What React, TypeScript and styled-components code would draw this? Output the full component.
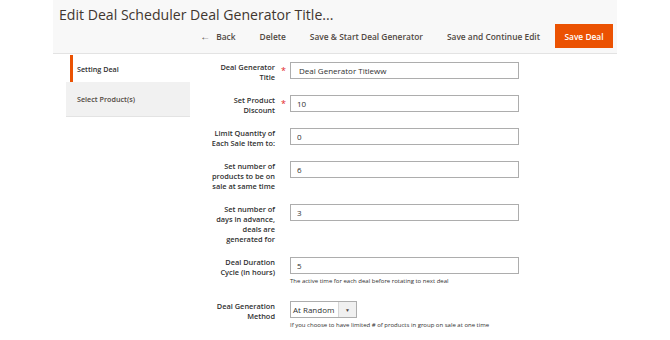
import React from 'react';
import styled, { createGlobalStyle } from 'styled-components';

const GlobalStyle = createGlobalStyle`
  html, body {
    margin: 0;
    padding: 0;
    background: #ffffff;
    font-family: "Open Sans", "Liberation Sans", sans-serif;
    color: #303030;
  }
`;

const Page = styled.div`
  width: 564px;
  margin: 0 auto;
`;

const Header = styled.header`
  background: #f8f8f8;
  border-bottom: 1px solid #e3e3e3;
  padding: 5px 4px 5px 6px;
`;

const Title = styled.h1`
  margin: 0;
  font-size: 14.1px;
  line-height: 19px;
  font-weight: 400;
  color: #41362f;
`;

const Actions = styled.div`
  display: flex;
  justify-content: flex-end;
  align-items: center;
`;

const TextButton = styled.button`
  background: none;
  border: none;
  padding: 0 12px;
  height: 24px;
  font-family: inherit;
  font-size: 8.4px;
  font-weight: 600;
  color: #514943;
  display: flex;
  align-items: center;
  gap: 6px;
  cursor: pointer;
`;

const Arrow = styled.span`
  font-size: 10px;
  line-height: 1;
`;

const PrimaryButton = styled.button`
  background: #eb5202;
  border: 1px solid #eb5202;
  color: #ffffff;
  height: 24px;
  width: 58px;
  margin-left: 3px;
  padding: 0;
  font-family: inherit;
  font-size: 8.4px;
  font-weight: 600;
  cursor: pointer;
`;

const Body = styled.div`
  display: flex;
  align-items: flex-start;
  padding-top: 1px;
`;

const Sidebar = styled.nav`
  width: 124px;
  margin-left: 13px;
  flex-shrink: 0;
`;

const Tab = styled.div<{ $active?: boolean }>`
  height: ${p => (p.$active ? '27px' : '35px')};
  box-sizing: border-box;
  display: flex;
  align-items: center;
  font-size: 7.2px;
  font-weight: 600;
  color: ${p => (p.$active ? '#303030' : '#514943')};
  background: ${p => (p.$active ? '#ffffff' : '#f1f1f1')};
  margin-left: ${p => (p.$active ? '4px' : '0')};
  padding-left: ${p => (p.$active ? '4px' : '11px')};
  border-left: ${p => (p.$active ? '3px solid #eb5202' : 'none')};
  border-bottom: ${p => (p.$active ? 'none' : '1px solid #e3e3e3')};
`;

const Form = styled.form`
  margin-left: 10px;
  margin-top: 7px;
  width: 330px;
`;

const Row = styled.div`
  display: grid;
  grid-template-columns: 75px 15px 229px;
  align-items: start;
  margin-bottom: 13px;
`;

const Label = styled.label`
  justify-self: end;
  text-align: right;
  width: 66px;
  font-size: 7.4px;
  line-height: 10px;
  font-weight: 600;
  color: #303030;
`;

const Required = styled.span`
  color: #e22626;
  font-size: 9px;
  line-height: 17px;
  text-align: center;
  padding-left: 2px;
`;

const Control = styled.div`
  display: flex;
  flex-direction: column;
  align-items: flex-start;
`;

const Input = styled.input<{ $pad?: number }>`
  width: 229px;
  height: 17px;
  box-sizing: border-box;
  border: 1px solid #adadad;
  padding: 0 0 0 ${p => p.$pad ?? 6}px;
  font-family: inherit;
  font-size: 8px;
  color: #303030;
  background: #ffffff;
  outline: none;
`;

const SelectBox = styled.div`
  display: flex;
  width: 67px;
  height: 17px;
  box-sizing: border-box;
  border: 1px solid #adadad;
  background: #ffffff;
  font-size: 8px;
  color: #303030;
`;

const SelectValue = styled.span`
  flex: 1;
  display: flex;
  align-items: center;
  padding-left: 2px;
`;

const SelectArrow = styled.span`
  width: 17px;
  display: flex;
  align-items: center;
  justify-content: center;
  background: #f0f0f0;
  border-left: 1px solid #d6d6d6;
  font-size: 5px;
  color: #514943;
`;

const Note = styled.div`
  font-size: 6px;
  line-height: 10px;
  margin: 2px 0 2px;
  color: #303030;
`;

type Field = {
  label: string;
  value: string;
  required?: boolean;
  note?: string;
  pad?: number;
};

const fields: Field[] = [
  { label: 'Deal Generator Title', value: 'Deal Generator Titleww', required: true, pad: 8 },
  { label: 'Set Product Discount', value: '10', required: true },
  { label: 'Limit Quantity of Each Sale Item to:', value: '0' },
  { label: 'Set number of products to be on sale at same time', value: '6' },
  { label: 'Set number of days in advance, deals are generated for', value: '3' },
  {
    label: 'Deal Duration Cycle (in hours)',
    value: '5',
    note: 'The active time for each deal before rotating to next deal',
  },
];

export default function App() {
  return (
    <>
      <GlobalStyle />
      <Page>
        <Header>
          <Title>Edit Deal Scheduler Deal Generator Title...</Title>
          <Actions>
            <TextButton type="button">
              <Arrow>←</Arrow>
              <span>Back</span>
            </TextButton>
            <TextButton type="button">Delete</TextButton>
            <TextButton type="button">Save &amp; Start Deal Generator</TextButton>
            <TextButton type="button">Save and Continue Edit</TextButton>
            <PrimaryButton type="button">Save Deal</PrimaryButton>
          </Actions>
        </Header>

        <Body>
          <Sidebar>
            <Tab $active>Setting Deal</Tab>
            <Tab>Select Product(s)</Tab>
          </Sidebar>

          <Form onSubmit={e => e.preventDefault()}>
            {fields.map(f => (
              <Row key={f.label}>
                <Label>{f.label}</Label>
                <Required>{f.required ? '*' : ''}</Required>
                <Control>
                  <Input defaultValue={f.value} $pad={f.pad} />
                  {f.note && <Note>{f.note}</Note>}
                </Control>
              </Row>
            ))}
            <Row>
              <Label>Deal Generation Method</Label>
              <Required />
              <Control>
                <SelectBox>
                  <SelectValue>At Random</SelectValue>
                  <SelectArrow>▼</SelectArrow>
                </SelectBox>
                <Note>If you choose to have limited # of products in group on sale at one time</Note>
              </Control>
            </Row>
          </Form>
        </Body>
      </Page>
    </>
  );
}
